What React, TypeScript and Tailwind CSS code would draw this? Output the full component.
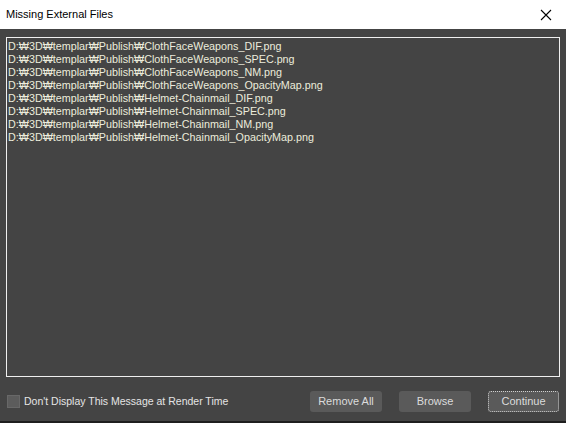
const files = [
  "ClothFaceWeapons_DIF.png",
  "ClothFaceWeapons_SPEC.png",
  "ClothFaceWeapons_NM.png",
  "ClothFaceWeapons_OpacityMap.png",
  "Helmet-Chainmail_DIF.png",
  "Helmet-Chainmail_SPEC.png",
  "Helmet-Chainmail_NM.png",
  "Helmet-Chainmail_OpacityMap.png",
];

const uiFont = { fontFamily: '"Liberation Sans", "Noto Sans CJK KR", sans-serif' };

export default function App() {
  return (
    <div
      className="w-[566px] h-[423px] flex flex-col bg-[#444444] overflow-hidden"
      style={uiFont}
    >
      {/* TITLE BAR */}
      <div className="h-[29px] bg-white flex items-center justify-between pl-[6px] pr-[14px] shrink-0">
        <span className="text-[11px] text-black">Missing External Files</span>
        <svg width="12" height="12" viewBox="0 0 12 12" className="text-black">
          <path d="M1 1 L11 11 M11 1 L1 11" stroke="currentColor" strokeWidth="1.1" />
        </svg>
      </div>

      {/* BODY */}
      <div className="flex-1 flex flex-col px-[6px] pt-[8px] pb-[3px] border-b-2 border-[#1e1e1e]">
        {/* FILE LIST */}
        <div className="h-[340px] border-[1.5px] border-[#f0f0f0] pt-[2px] pl-[1px]">
          {files.map((f) => (
            <div key={f} className="h-[13px] leading-[13px] text-[10.75px] text-[#ececdc] whitespace-nowrap">
              D:₩3D₩templar₩Publish₩{f}
            </div>
          ))}
        </div>

        {/* FOOTER */}
        <div className="flex items-center mt-[14px] pr-[1px]">
          <div className="flex items-center gap-[4px] pl-[1px] flex-1">
            <div className="w-[13px] h-[13px] bg-[#5c5c5c] border border-[#686868]" />
            <span className="text-[10.5px] text-[#e4e4e4]">Don't Display This Message at Render Time</span>
          </div>
          <div className="flex gap-[17px]">
            <button className="w-[72px] h-[21px] rounded-[3px] bg-[#5a5a5a] text-[11px] text-[#dcdcdc]">
              Remove All
            </button>
            <button className="w-[72px] h-[21px] rounded-[3px] bg-[#5a5a5a] text-[11px] text-[#dcdcdc]">
              Browse
            </button>
            <button className="w-[71px] h-[21px] rounded-[3px] bg-[#5a5a5a] text-[11px] text-[#dcdcdc] border border-dotted border-[#d0d0d0]">
              Continue
            </button>
          </div>
        </div>
      </div>
    </div>
  );
}
